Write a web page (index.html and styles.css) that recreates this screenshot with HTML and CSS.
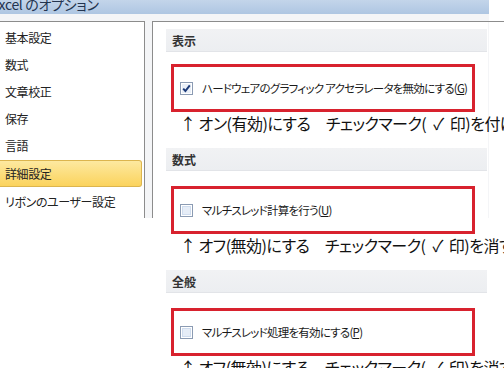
FILE: index.html
```html
<!DOCTYPE html>
<html>

<head>
    <meta charset="UTF-8">

    <link rel="stylesheet" href="styles.css">
</head>

<body>

    <div class="window">
        <div class="titlebar">
            <span class="title">Excel のオプション</span>
        </div>

        <div class="main">
            <ul class="nav">
                <li class="nav-item">基本設定</li>
                <li class="nav-item">数式</li>
                <li class="nav-item">文章校正</li>
                <li class="nav-item">保存</li>
                <li class="nav-item">言語</li>
                <li class="nav-item selected">詳細設定</li>
                <li class="nav-item">リボンのユーザー設定</li>
            </ul>

            <div class="pane">

                <div class="group first">
                    <div class="group-head">表示</div>
                    <div class="option-box">
                        <label class="option">
                            <span class="check">
                                <svg width="13" height="13" viewBox="0 0 13 13">
                                    <rect x="0.5" y="0.5" width="12" height="12" fill="#fff" stroke="#8b9bb3" />
                                    <rect x="2" y="2" width="9" height="9" fill="#e9eff8" />
                                    <path d="M3.2 6.6 L5.4 9 L9.8 3.4" fill="none" stroke="#1c3a78" stroke-width="2" />
                                </svg>
                            </span>
                            <span class="option-text">ハードウェアのグラフィック アクセラレータを無効にする(<u>G</u>)</span>
                        </label>
                    </div>
                    <p class="note">↑ オン(有効)にする　チェックマーク(<span class="mark">✓</span>印)を付ける</p>
                </div>

                <div class="group">
                    <div class="group-head">数式</div>
                    <div class="option-box">
                        <label class="option">
                            <span class="check">
                                <svg width="13" height="13" viewBox="0 0 13 13">
                                    <rect x="0.5" y="0.5" width="12" height="12" fill="#fff" stroke="#8b9bb3" />
                                    <rect x="2" y="2" width="9" height="9" fill="#cfdcee" />
                                    <rect x="3" y="3" width="7" height="7" fill="#e6edf7" />
                                </svg>
                            </span>
                            <span class="option-text">マルチスレッド計算を行う(<u>U</u>)</span>
                        </label>
                    </div>
                    <p class="note">↑ オフ(無効)にする　チェックマーク(<span class="mark">✓</span>印)を消す</p>
                </div>

                <div class="group">
                    <div class="group-head">全般</div>
                    <div class="option-box">
                        <label class="option">
                            <span class="check">
                                <svg width="13" height="13" viewBox="0 0 13 13">
                                    <rect x="0.5" y="0.5" width="12" height="12" fill="#fff" stroke="#8b9bb3" />
                                    <rect x="2" y="2" width="9" height="9" fill="#cfdcee" />
                                    <rect x="3" y="3" width="7" height="7" fill="#e6edf7" />
                                </svg>
                            </span>
                            <span class="option-text">マルチスレッド処理を有効にする(<u>P</u>)</span>
                        </label>
                    </div>
                    <p class="note">↑ オフ(無効)にする　チェックマーク(<span class="mark">✓</span>印)を消す</p>
                </div>

            </div>
        </div>
    </div>

</body>

</html>
```

FILE: styles.css
```css
body {
    margin: 0;
    background-color: #fff;
    overflow: hidden;
    font-family: "Noto Sans CJK JP", "Liberation Sans", sans-serif;
    color: #1e1e1e;
}

.window {
    width: 504px;
}

.titlebar {
    width: 489px;
    height: 14px;
    background: linear-gradient(#c3d5ea, #aec6e2);
    overflow: hidden;
}

.title {
    display: block;
    margin-left: -9px;
    margin-top: -5px;
    font-size: 14px;
    line-height: 18px;
    color: #23344f;
    font-feature-settings: "palt";
    letter-spacing: -0.3px;
}

/* the grey frame of the dialog only reaches down to y=218 */
.main {
    display: flex;
    align-items: flex-start;
    gap: 7px;
    padding-top: 7px;
    background: linear-gradient(#f4f5f7, #f4f5f7) left top / 489px 204px no-repeat;
}

.nav {
    list-style: none;
    margin: 0;
    padding: 2px 0 0 0;
    width: 145px;
    height: 197px;
    box-sizing: border-box;
    flex-shrink: 0;
    background-color: #fff;
    border-top: 1px solid #8c8c8c;
    border-right: 1px solid #8c8c8c;
}

.nav-item {
    height: 27px;
    line-height: 27px;
    padding-left: 5px;
    font-size: 12px;
    letter-spacing: -0.4px;
    font-feature-settings: "palt";
    color: #222;
}

.nav-item.selected {
    height: 25px;
    line-height: 25px;
    margin: 1px 2px 1px 0;
    border: 1px solid #dcb54e;
    border-left: none;
    border-radius: 0 3px 3px 0;
    background: linear-gradient(#fde9a0, #fbd35d);
}

.pane {
    flex: 1;
    min-width: 0;
    padding: 7px 0 0 14px;
    border-top: 1px solid #8c8c8c;
    background:
        linear-gradient(#8c8c8c, #8c8c8c) left top / 1px 196px no-repeat,
        linear-gradient(#fff, #fff) left top / 336px 196px no-repeat;
}

.group {
    margin-bottom: 14px;
    width: 321px;
}

.group-head {
    height: 23px;
    line-height: 23px;
    padding-left: 6px;
    font-size: 12px;
    font-weight: bold;
    color: #333;
    background: linear-gradient(#f1f2f4, #eceef1);
    border-bottom: 1px solid #e2e4e8;
    box-sizing: border-box;
}

.option-box {
    margin: 15px 0 0 5px;
    width: 304px;
    height: 48px;
    box-sizing: border-box;
    border: 3px solid #d8222e;
    display: flex;
    align-items: center;
    padding-left: 6px;
}

.group.first .option-box {
    margin-top: 12px;
}

.option {
    display: flex;
    align-items: center;
    gap: 9px;
}

.option-text {
    font-size: 11.5px;
    letter-spacing: -0.75px;
    font-feature-settings: "palt";
    color: #1a1a1a;
    white-space: nowrap;
}

.check {
    display: flex;
}

.note {
    margin: 0 0 0 14px;
    height: 22px;
    line-height: 22px;
    font-size: 16px;
    letter-spacing: -0.5px;
    white-space: nowrap;
    font-feature-settings: "palt";
    color: #111;
}

.mark {
    margin: 0 6px 0 7px;
}
```
